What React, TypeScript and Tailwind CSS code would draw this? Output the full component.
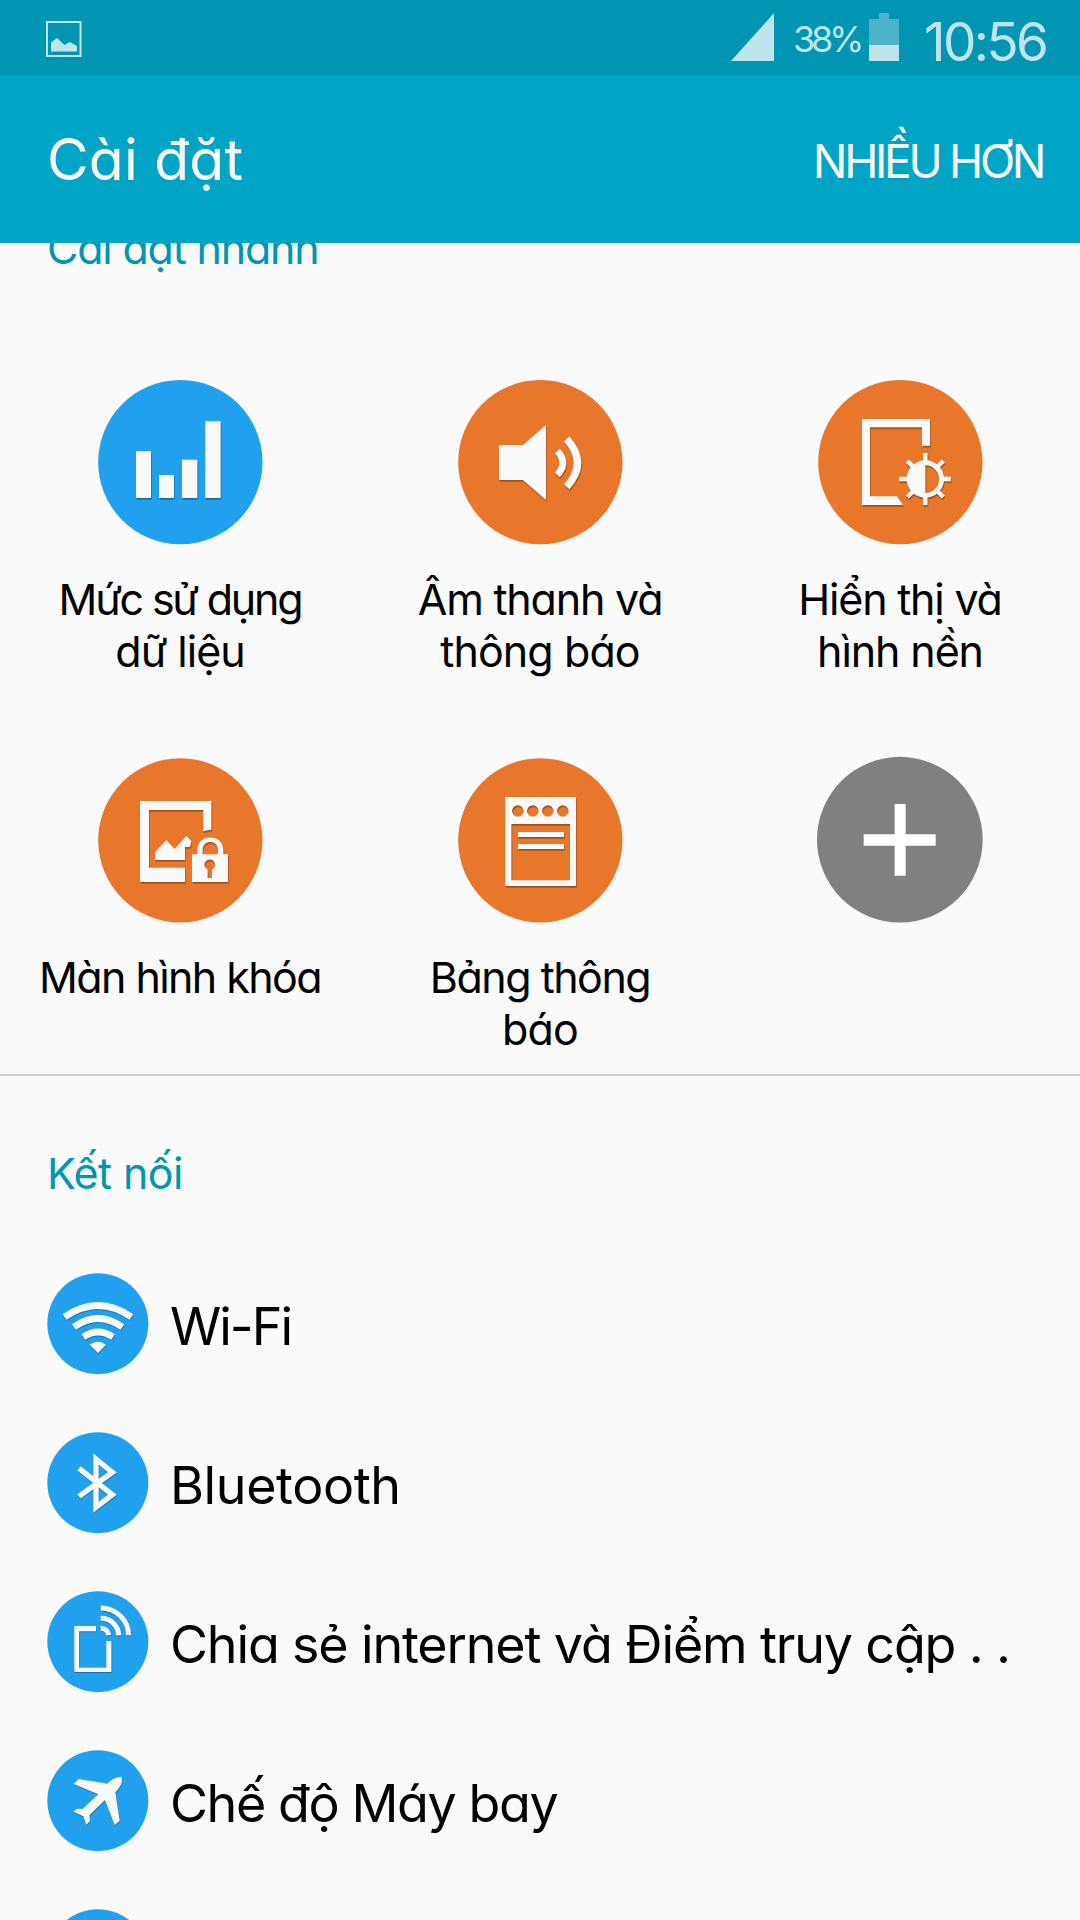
import type { ReactNode } from 'react';

const ORANGE = '#e8762b';
const BLUE = '#21a0ee';

export default function App() {
  return (
    <div className="flex h-[1920px] w-[1080px] flex-col overflow-hidden bg-[#fafafa] font-['Inter',sans-serif] whitespace-nowrap text-black [font-feature-settings:'cv11','ss03']">
      <StatusBar />

      {/* Action bar */}
      <header className="flex h-[168px] shrink-0 items-center justify-between bg-[#00a5c5] pr-[37px] pl-[47px] text-[#fafafa]">
        <h1 className="pt-[2px] text-[57px] tracking-[0.2px]">Cài đặt</h1>
        <span className="pt-[4px] text-[46px] tracking-[-3.3px]">NHIỀU HƠN</span>
      </header>

      <main className="min-h-0 flex-1 overflow-hidden">
        {/* Quick settings, scrolled partly under the action bar */}
        <section className="-mt-[21px] h-[854px] border-b-2 border-[#cfcfcf]">
          <h2 className="pl-[47px] text-[43px] leading-[52px] tracking-[-1.2px] text-[#0095b3]">Cài đặt nhanh</h2>
          <div className="mt-[105px] grid grid-cols-3 gap-y-[22px]">
            <Tile icon={<DataUsageIcon />}>
              <p className="tracking-[-2.2px]">Mức sử dụng</p>
              <p className="tracking-[-1px]">dữ liệu</p>
            </Tile>
            <Tile icon={<SoundIcon />}>
              <p className="tracking-[-1.2px]">Âm thanh và</p>
              <p className="tracking-[-0.9px]">thông báo</p>
            </Tile>
            <Tile icon={<DisplayIcon />}>
              <p className="tracking-[-1.2px]">Hiển thị và</p>
              <p className="tracking-[-1.1px]">hình nền</p>
            </Tile>
            <Tile icon={<LockScreenIcon />}>
              <p className="tracking-[-1.6px]">Màn hình khóa</p>
            </Tile>
            <Tile icon={<PanelIcon />}>
              <p className="tracking-[-1.5px]">Bảng thông</p>
              <p className="tracking-[-0.9px]">báo</p>
            </Tile>
            <Tile icon={<AddIcon />} />
          </div>
        </section>

        {/* Connections */}
        <section className="pt-[71px]">
          <h2 className="pl-[47px] text-[43px] leading-[52px] tracking-[-0.6px] text-[#0095b3]">Kết nối</h2>
          <ul className="mt-[73px] flex flex-col gap-[56px]">
            <Row label="Wi-Fi" spacing="tracking-[-2px]">
              <WifiIcon />
            </Row>
            <Row label="Bluetooth" spacing="tracking-[-0.4px]">
              <BluetoothIcon />
            </Row>
            <Row label="Chia sẻ internet và Điểm truy cập . ." spacing="tracking-[-1.15px]">
              <HotspotIcon />
            </Row>
            <Row label="Chế độ Máy bay" spacing="tracking-[-1.4px]">
              <AirplaneIcon />
            </Row>
            <Row label="" spacing="">
              <SmallIcon viewBox="48 984 309 309" cy={1139} />
            </Row>
          </ul>
        </section>
      </main>
    </div>
  );
}

function StatusBar() {
  return (
    <div className="flex h-[75px] shrink-0 items-start bg-[#0095b3] text-[#bfe4ec]">
      <svg className="mt-[21px] ml-[46px]" width="36" height="36" viewBox="0 0 36 36">
        <rect x="1" y="1" width="33.5" height="34" fill="none" stroke="#bfe4ec" strokeWidth="2" />
        <path d="M5 21.500 L11 17 L18.500 24 L24 21 L31 25 V30.500 H5 Z" fill="#bfe4ec" />
      </svg>
      <svg className="mt-[13px] ml-[649px]" width="43" height="48" viewBox="0 0 43 48">
        <path d="M0 48 L43 0 V48 Z" fill="#bfe4ec" />
      </svg>
      <span className="mt-[18px] ml-[19px] w-[68px] text-[36px] leading-[42px] tracking-[-4.2px]">38%</span>
      <svg className="mt-[13px] ml-[8px]" width="30" height="48" viewBox="0 0 30 48">
        <path d="M10 0 H20 V6 H30 V32 H0 V6 H10 Z" fill="#4db3ca" />
        <path d="M0 32 H30 V48 H0 Z" fill="#bfe4ec" />
      </svg>
      <span className="mt-[12px] ml-[25px] text-[53px] leading-[60px] tracking-[-2.6px]">10:56</span>
    </div>
  );
}

function Tile({ icon, children }: { icon: ReactNode; children?: ReactNode }) {
  return (
    <div className="flex h-[356px] flex-col items-center last:h-[316px]">
      {icon}
      <div className="mt-[28px] text-center text-[43px] leading-[52px]">{children}</div>
    </div>
  );
}

function Row({ label, spacing, children }: { label: string; spacing: string; children: ReactNode }) {
  return (
    <li className="flex h-[103px] shrink-0 items-center gap-[21px] pl-[46px]">
      {children}
      <span className={`pt-[7px] text-[52px] leading-none ${spacing}`}>{label}</span>
    </li>
  );
}

function BigIcon({
  viewBox,
  cy,
  color = ORANGE,
  children,
}: {
  viewBox: string;
  cy: number;
  color?: string;
  children?: ReactNode;
}) {
  return (
    <svg className="shrink-0 overflow-visible" width="166" height="166" viewBox={viewBox}>
      <circle cx="301" cy={cy} r="246.5" fill={color} />
      <g className="drop-shadow-[2px_5px_0.5px_rgba(0,0,0,0.32)]" fill="#fafafa">
        {children}
      </g>
    </svg>
  );
}

function SmallIcon({ viewBox, cy, children }: { viewBox: string; cy: number; children?: ReactNode }) {
  return (
    <svg className="shrink-0" width="103" height="103" viewBox={viewBox}>
      <circle cx="203.5" cy={cy} r="151.5" fill={BLUE} />
      <g className="drop-shadow-[1px_3px_0.5px_rgba(0,0,0,0.3)]" fill="#fafafa">
        {children}
      </g>
    </svg>
  );
}

function DataUsageIcon() {
  return (
    <BigIcon viewBox="51 57 498 498" cy={306.5} color={BLUE}>
      <path d="M168 274 H213 V414 H168 Z M237 345 H282 V414 H237 Z M306 299 H352 V414 H306 Z M376 184 H422 V414 H376 Z" />
    </BigIcon>
  );
}

function SoundIcon() {
  return (
    <BigIcon viewBox="51 57 498 498" cy={306.5}>
      <path d="M177 255 H249 L318 195 V420 L249 360 H177 Z" />
      <path d="M352 273 Q385 309 352 345" fill="none" stroke="#fafafa" strokeWidth="20" />
      <path d="M380 237 Q445 309 380 380" fill="none" stroke="#fafafa" strokeWidth="22" />
    </BigIcon>
  );
}

function DisplayIcon() {
  return (
    <BigIcon viewBox="51 57 498 498" cy={306.5}>
      <path d="M186 177 H390 V257 H366 V202 H210 V409 H291 L309 435 H186 Z" />
      <path
        fillRule="evenodd"
        d="M376 301 A56 56 0 0 1 376 413 A56 56 0 0 1 376 301 Z M376 316 V399 A41.500 41.500 0 0 0 376 316 Z"
      />
      <path
        d="M376 279 V304 M376 411 V435 M297 357 H323 M429 357 H453 M322 303 L338 319 M414 395 L430 411 M322 411 L338 395 M414 319 L430 303"
        fill="none"
        stroke="#fafafa"
        strokeWidth="13"
      />
    </BigIcon>
  );
}

function LockScreenIcon() {
  return (
    <BigIcon viewBox="51 51 498 498" cy={301}>
      <path d="M180 183 H394 V269 Q382 270 370 274 V210 H207 V383 H315 V426 H180 Z" />
      <path d="M225 337 L259 301 L284 327 L319 288 L334 304 L330 321 H315 V360 H225 Z" />
      <path
        fillRule="evenodd"
        d="M336 343 H352 V330 C352 280 430 280 430 330 V343 H444 V426 H336 Z M368 343 H414 V330 C414 298 368 298 368 330 Z M383 389 V414 H396 V389 A16 16 0 1 0 383 389 Z"
      />
    </BigIcon>
  );
}

function PanelIcon() {
  return (
    <BigIcon viewBox="51 51 498 498" cy={301}>
      <path
        fillRule="evenodd"
        d="M196 171 H408 V438 H196 Z M214 252 V421 H390 V252 Z M216 213 a17.500 17.500 0 1 0 35 0 a17.500 17.500 0 1 0 -35 0 Z M261 213 a17.500 17.500 0 1 0 35 0 a17.500 17.500 0 1 0 -35 0 Z M306 213 a17.500 17.500 0 1 0 35 0 a17.500 17.500 0 1 0 -35 0 Z M351 213 a17.500 17.500 0 1 0 35 0 a17.500 17.500 0 1 0 -35 0 Z"
      />
      <path d="M234 276 H372 V291 H234 Z M234 312 H372 V327 H234 Z" />
    </BigIcon>
  );
}

function AddIcon() {
  return (
    <svg className="shrink-0 overflow-visible" width="166" height="166" viewBox="51 51 498 498">
      <circle cx="299.5" cy="299" r="248.5" fill="#808080" />
      <path d="M284 192 H317 V283 H407 V317 H317 V407 H284 V317 H191 V283 H284 Z" fill="#fff" />
    </svg>
  );
}

function WifiIcon() {
  return (
    <SmallIcon viewBox="48 36 309 309" cy={191}>
      <path
        d="M104 171 Q204 102 304 171 M132 201 Q204 150 277 201 M160 231 Q204 201 249 231"
        fill="none"
        stroke="#fafafa"
        strokeWidth="20"
      />
      <path d="M179 254 Q204 237 228 254 L204 279 Z" />
    </SmallIcon>
  );
}

function BluetoothIcon() {
  return (
    <SmallIcon viewBox="48 513 309 309" cy={668}>
      <path
        d="M147 625 L247 704 L198 742 V597 L247 637 L147 709"
        fill="none"
        stroke="#fafafa"
        strokeWidth="16"
        strokeMiterlimit="10"
      />
    </SmallIcon>
  );
}

function HotspotIcon() {
  return (
    <SmallIcon viewBox="48 30 309 309" cy={185}>
      <path d="M133 138 H198 V154 H147 V263 H229 V183 H244 V276 H133 Z" />
      <path
        d="M212 145 A23 23 0 0 1 236 166 M212 115 A53 52 0 0 1 266 166 M212 84 A84 83 0 0 1 296 166"
        fill="none"
        stroke="#fafafa"
        strokeWidth="15"
      />
    </SmallIcon>
  );
}

function AirplaneIcon() {
  return (
    <SmallIcon viewBox="48 507 309 309" cy={662}>
      <path d="M146 597 L232 611 Q252 590 275 591 Q281 612 256 637 L269 722 L254 735 L225 660 L178 706 L180 723 L169 734 L160 709 L131 695 L141 686 L158 687 L205 643 L131 612 Z" />
    </SmallIcon>
  );
}
